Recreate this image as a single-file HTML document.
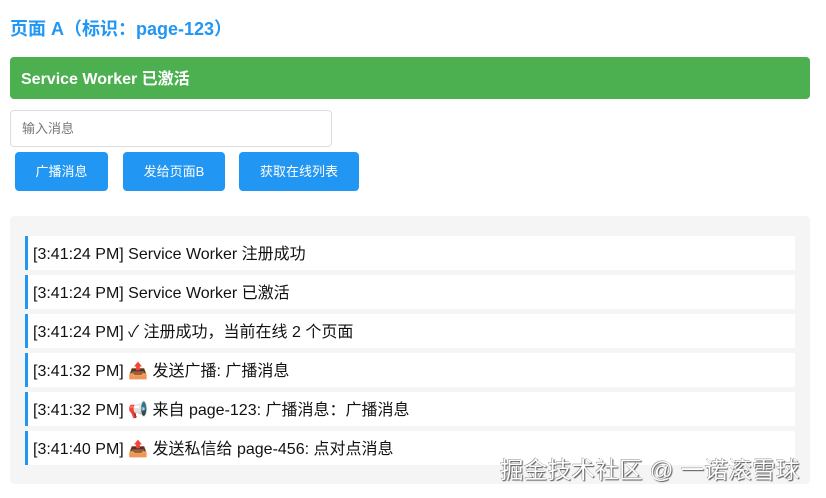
<!DOCTYPE html>
<html><head><meta charset="utf-8"><style>
*{box-sizing:border-box;margin:0;padding:0}
body{width:826px;height:498px;background:#fff;font-family:"Liberation Sans","Noto Sans CJK SC",sans-serif;position:relative;overflow:hidden}
h1{position:absolute;left:10px;top:15px;font-size:18px;color:#2196F3;font-weight:bold}
.bar{position:absolute;left:10px;top:57px;width:800px;height:42px;background:#4CAF50;border-radius:4px;color:#fff;font-weight:bold;font-size:16px;line-height:45px;padding-left:11px}
.inp{position:absolute;left:10px;top:110px;width:322px;height:37px;border:1px solid #ddd;border-radius:4px;font-size:13px;color:#777;line-height:35px;padding-left:11px}
.btn{position:absolute;top:152px;height:39px;background:#2196F3;color:#fff;border-radius:4px;font-size:13px;line-height:40px;text-align:center}
.log{position:absolute;left:10px;top:216px;width:800px;height:268px;background:#f5f5f5;border-radius:4px}
.e{position:absolute;left:15px;width:770px;height:34px;background:#fff;border-left:3px solid #2196F3;font-size:16px;line-height:38px;padding-left:5px;color:#111;overflow:hidden}
.wm{position:absolute;left:500px;top:451px;font-size:23.5px;letter-spacing:0.3px;color:#fff;text-shadow:1px 1px 1px #555,-0.5px -0.5px 0 #888;white-space:nowrap}
</style></head><body>
<h1>页面 A（标识：page-123）</h1>
<div class="bar">Service Worker 已激活</div>
<div class="inp">输入消息</div>
<div class="btn" style="left:15px;width:93px">广播消息</div>
<div class="btn" style="left:123px;width:102px">发给页面B</div>
<div class="btn" style="left:239px;width:120px">获取在线列表</div>
<div class="log">
<div class="e" style="top:20px">[3:41:24 PM] Service Worker 注册成功</div>
<div class="e" style="top:59px">[3:41:24 PM] Service Worker 已激活</div>
<div class="e" style="top:98px">[3:41:24 PM] ✓ 注册成功，当前在线 2 个页面</div>
<div class="e" style="top:137px">[3:41:32 PM] <span style="color:#3a6fb0">📤</span> 发送广播: 广播消息</div>
<div class="e" style="top:176px">[3:41:32 PM] <span style="color:#e0406a">📢</span> 来自 page-123: 广播消息：广播消息</div>
<div class="e" style="top:215px">[3:41:40 PM] <span style="color:#3a6fb0">📤</span> 发送私信给 page-456: 点对点消息</div>
</div>
<div class="wm">掘金技术社区 @ 一诺滚雪球</div>
</body></html>
